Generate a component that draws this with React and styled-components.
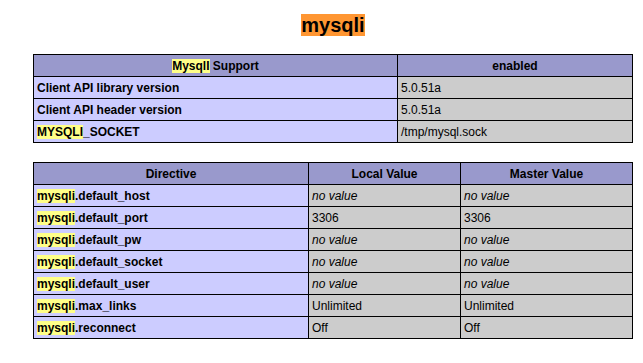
import React from 'react';
import styled, { createGlobalStyle } from 'styled-components';

const GlobalStyle = createGlobalStyle`
  body {
    margin: 0;
    background: #ffffff;
    font-family: "Liberation Sans", Arial, sans-serif;
    color: #000000;
  }
`

const Page = styled.div`
  width: 600px;
  margin-left: 33px;
  padding-top: 13px;
  display: flex;
  flex-direction: column;
  align-items: center;
`

const Title = styled.h2`
  margin: 0 0 17px;
  font-size: 20px;
  line-height: 24px;
  font-weight: bold;
`

const Mark = styled.span`
  background: ${({ active }) => (active ? '#ff9632' : '#ffff88')};
`

const Table = styled.table`
  width: 600px;
  border-collapse: collapse;
  table-layout: fixed;
  margin-bottom: 19px;
  font-size: 12px;
  line-height: 15px;
  td, th {
    border: 1px solid #000000;
    padding: 4px 3px 2px;
    white-space: nowrap;
    overflow: hidden;
    text-align: left;
  }
`

const Head = styled.th`
  && {
    text-align: center;
  }
  background: #9999cc;
  font-weight: bold;
`

const Key = styled.td`
  background: #ccccff;
  font-weight: bold;
`

const Value = styled.td`
  background: #cccccc;
  font-style: ${({ empty }) => (empty ? 'italic' : 'normal')};
`

const support = [
  { key: 'Client API library version', value: '5.0.51a' },
  { key: 'Client API header version', value: '5.0.51a' },
  { key: <><Mark>MYSQLI</Mark>_SOCKET</>, value: '/tmp/mysql.sock' },
]

const directives = [
  ['default_host', null, null],
  ['default_port', '3306', '3306'],
  ['default_pw', null, null],
  ['default_socket', null, null],
  ['default_user', null, null],
  ['max_links', 'Unlimited', 'Unlimited'],
  ['reconnect', 'Off', 'Off'],
]

const Cell = ({ value }) => (
  <Value empty={!value}>{value || 'no value'}</Value>
)

const App = () => {
  return (
    <>
      <GlobalStyle />
      <Page>
        <Title><Mark active>mysqli</Mark></Title>

        <Table>
          <colgroup>
            <col style={{ width: 364 }} />
            <col />
          </colgroup>
          <thead>
            <tr>
              <Head><Mark>MysqlI</Mark> Support</Head>
              <Head>enabled</Head>
            </tr>
          </thead>
          <tbody>
            {support.map((row, i) => (
              <tr key={i}>
                <Key>{row.key}</Key>
                <Cell value={row.value} />
              </tr>
            ))}
          </tbody>
        </Table>

        <Table>
          <colgroup>
            <col style={{ width: 275 }} />
            <col style={{ width: 152 }} />
            <col />
          </colgroup>
          <thead>
            <tr>
              <Head>Directive</Head>
              <Head>Local Value</Head>
              <Head>Master Value</Head>
            </tr>
          </thead>
          <tbody>
            {directives.map(([name, local, master]) => (
              <tr key={name}>
                <Key><Mark>mysqli</Mark>.{name}</Key>
                <Cell value={local} />
                <Cell value={master} />
              </tr>
            ))}
          </tbody>
        </Table>
      </Page>
    </>
  )
}

export default App;
